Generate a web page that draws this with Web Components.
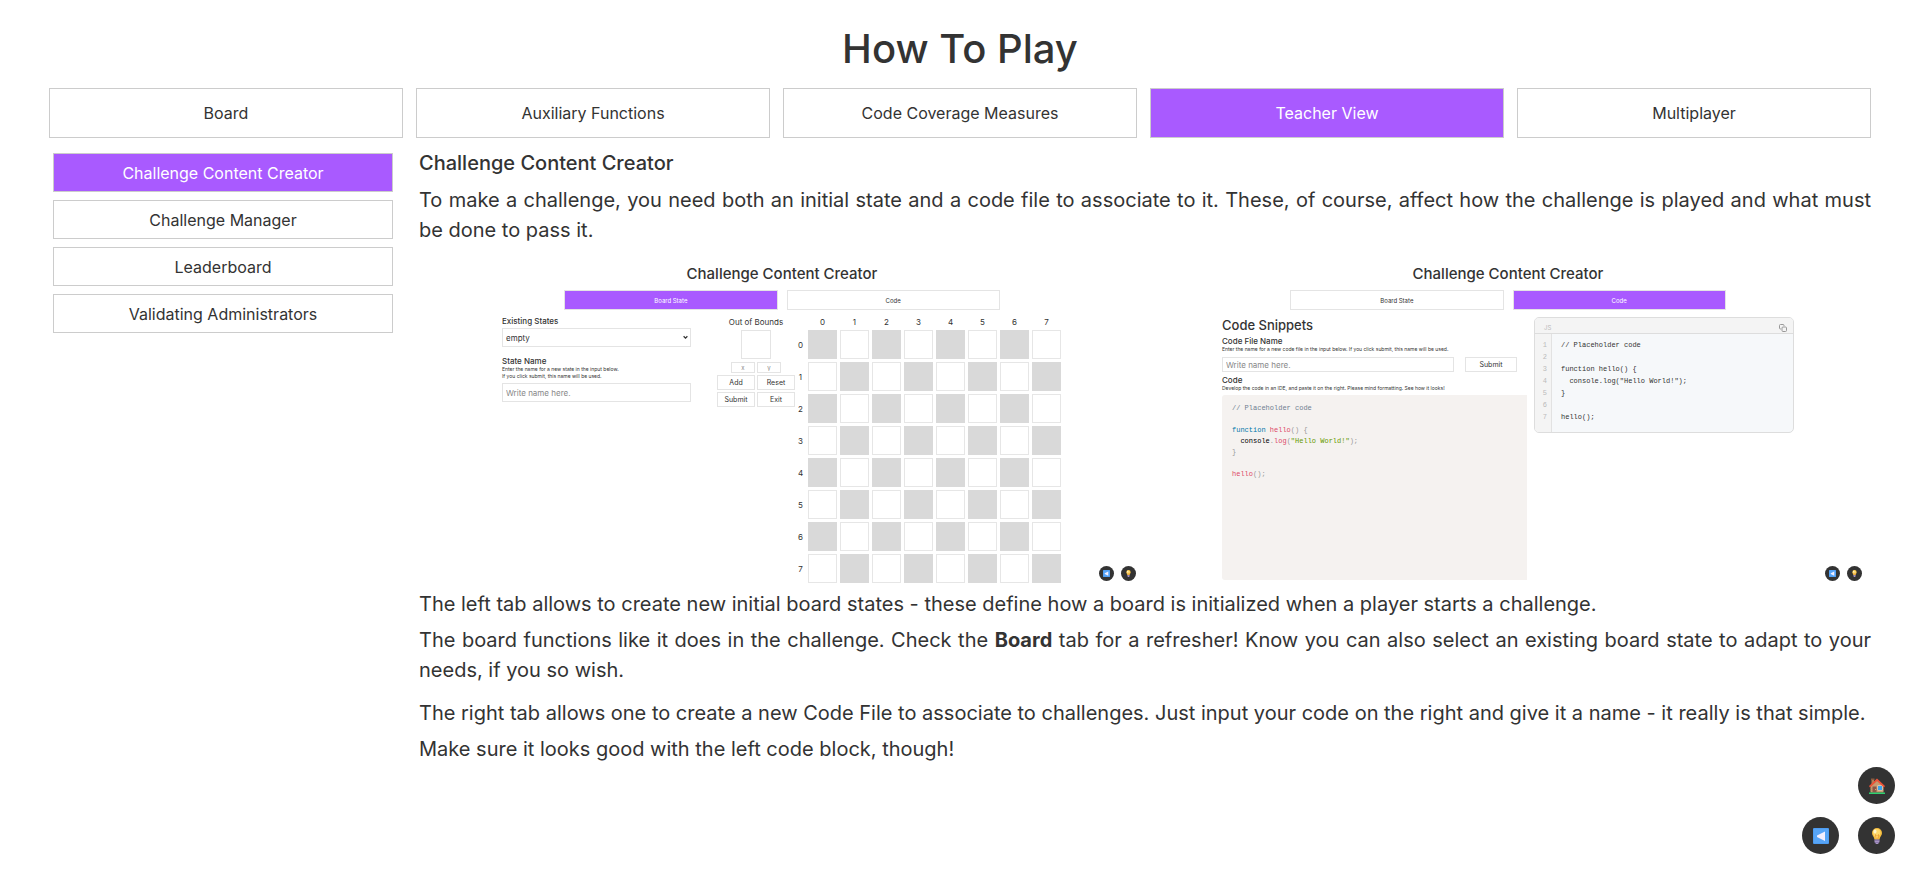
<!DOCTYPE html>
<html lang="en">
<head>
<meta charset="utf-8">
<title>How To Play</title>
<style>
  body { margin: 0; font-family: Inter, "Open Sans", sans-serif; color: #333; background: #fff; }
</style>
</head>
<body>

<how-to-page>
  <span slot="title">How To Play</span>
  <tab-button slot="tabs" kind="main">Board</tab-button>
  <tab-button slot="tabs" kind="main">Auxiliary Functions</tab-button>
  <tab-button slot="tabs" kind="main">Code Coverage Measures</tab-button>
  <tab-button slot="tabs" kind="main" active>Teacher View</tab-button>
  <tab-button slot="tabs" kind="main">Multiplayer</tab-button>

  <tab-button slot="sections" kind="side" active>Challenge Content Creator</tab-button>
  <tab-button slot="sections" kind="side">Challenge Manager</tab-button>
  <tab-button slot="sections" kind="side">Leaderboard</tab-button>
  <tab-button slot="sections" kind="side">Validating Administrators</tab-button>

  <help-article>
    <span slot="heading">Challenge Content Creator</span>
    <help-text>To make a challenge, you need both an initial state and a code file to associate to it. These, of course, affect how the challenge is played and what must be done to pass it.</help-text>
    <figure-row>
      <creator-figure active="state"><board-state-view></board-state-view></creator-figure>
      <creator-figure active="code"><code-view></code-view></creator-figure>
    </figure-row>
    <help-text>The left tab allows to create new initial board states - these define how a board is initialized when a player starts a challenge.</help-text>
    <help-text spaced>The board functions like it does in the challenge. Check the <b>Board</b> tab for a refresher! Know you can also select an existing board state to adapt to your needs, if you so wish.</help-text>
    <help-text>The right tab allows one to create a new Code File to associate to challenges. Just input your code on the right and give it a name - it really is that simple.</help-text>
    <help-text>Make sure it looks good with the left code block, though!</help-text>
  </help-article>

  <round-button slot="float" class="first" icon="home" label="Home"></round-button>
  <round-button slot="float" icon="back" label="Back"></round-button>
  <round-button slot="float" icon="bulb" label="Hint"></round-button>
</how-to-page>

<script>
const BASE = `
  *, *::before, *::after { box-sizing: border-box; }
  button, input, select, textarea { font: inherit; color: inherit; margin: 0; border-radius: 0; outline: 0; }
`;

function define(name, html, setup) {
  const template = document.createElement('template');
  template.innerHTML = `<style>${BASE}</style>${html}`;
  customElements.define(name, class extends HTMLElement {
    constructor() {
      super();
      this.attachShadow({ mode: 'open' }).append(template.content.cloneNode(true));
    }
    connectedCallback() { if (setup) setup(this, this.shadowRoot); }
  });
}

/* Emoji-like pictures used in the round buttons */
const ICONS = {
  home: `<svg viewBox="0 0 32 32" aria-hidden="true">
    <path fill="#b07c55" d="M5 3h5v9H5z"/><path fill="#8a5c40" d="M4 1h7v3H4z"/>
    <path fill="#c79a70" d="M16 5 29 17v12H3V17z"/>
    <path fill="#b58a62" d="M3 20h26v1H3zM3 24h26v1H3z"/>
    <path fill="#8a5548" d="M7 17h8v12H7z"/><circle cx="13" cy="23" r="1" fill="#e8bd80"/>
    <path fill="#efe9e0" d="M17 15h10v10H17z"/><path fill="#3da3ea" d="M18 16h8v8h-8z"/>
    <path fill="#ee5238" d="M16 1 0 16l2 3L16 6l14 13 2-3z"/>
    <path fill="#2fd070" d="M0 29h32v3H0z"/></svg>`,
  back: `<svg viewBox="0 0 32 32" aria-hidden="true">
    <rect width="32" height="32" rx="2" fill="#4795ec"/>
    <rect x="1" y="1" width="30" height="30" rx="2" fill="#57a5f7"/>
    <path fill="#f4efff" d="M24 7v19L8 18v-3z"/></svg>`,
  bulb: `<svg viewBox="0 0 32 32" aria-hidden="true">
    <path fill="#f6bd3c" d="M16 0a10 10 0 0 0-10 10c0 5 4 7 5 13h10c1-6 5-8 5-13A10 10 0 0 0 16 0z"/>
    <path fill="#ffd96b" d="M14 2a8 8 0 0 0-6 8c0 4 4 6 5 11h4c2-6 6-7 6-12s-4-8-9-7z"/>
    <ellipse cx="12" cy="7" rx="3" ry="4" fill="#fff4c8"/>
    <path fill="#e7902c" d="m12 12 2 11h1l-1-9 2 2 2-2-1 9h1l2-11-4 3z"/>
    <path fill="#a895c4" d="M11 23h10v5l-3 4h-4l-3-4z"/>
    <path fill="#6f5c90" d="M11 25h10v1H11zM11 28h9v1h-9z"/></svg>`
};

define('how-to-page', `
  <style>
    :host { display: block; padding: 18px 49px 40px; }
    h1 { margin: 0 0 8px; font-size: 40px; line-height: 62px; font-weight: 500; text-align: center; }
    .tabs { display: grid; grid-template-columns: repeat(5, 1fr); gap: 13px; }
    .columns { display: grid; grid-template-columns: 340px minmax(0, 1fr); gap: 26px; padding: 10px 0 0 4px; }
    .sections { display: flex; flex-direction: column; gap: 8px; padding-top: 5px; }
    .float { position: fixed; right: 25px; bottom: 24px; display: grid;
             grid-template-columns: auto auto; gap: 13px 19px; }
    ::slotted(.first) { grid-column: 2; }
  </style>
  <h1><slot name="title"></slot></h1>
  <nav class="tabs" aria-label="Topics"><slot name="tabs"></slot></nav>
  <div class="columns">
    <nav class="sections" aria-label="Sections"><slot name="sections"></slot></nav>
    <main><slot></slot></main>
  </div>
  <div class="float"><slot name="float"></slot></div>
`);

define('tab-button', `
  <style>
    :host { display: block; }
    button { display: block; width: 100%; padding: 0; border: 1px solid #ccc; background: #fff;
             font-size: 16px; height: 39px; cursor: pointer; }
    :host([kind="main"]) button { height: 50px; }
    :host([kind="mini"]) button { height: 20px; font-size: 6px; border-color: #e4e4e4; }
    :host([active]) button { background: #a95aff; color: #fff; }
  </style>
  <button type="button"><slot></slot></button>
`);

define('help-article', `
  <style>
    :host { display: block; }
    h2 { margin: 0 0 7px; font-size: 20px; line-height: 30px; font-weight: 500; }
  </style>
  <article><h2><slot name="heading"></slot></h2><slot></slot></article>
`);

define('help-text', `
  <style>
    :host { display: block; }
    p { margin: 0 0 6px; font-size: 20px; line-height: 30px; text-align: justify; }
    :host([spaced]) p { margin-bottom: 13px; }
  </style>
  <p><slot></slot></p>
`);

define('figure-row', `
  <style>
    :host { display: grid; grid-template-columns: 1fr 1fr; padding: 9px 0 6px; }
  </style>
  <slot></slot>
`);

define('round-button', `
  <style>
    :host { display: block; }
    button { display: flex; align-items: center; justify-content: center; width: 37px; height: 37px;
             padding: 0; border: 0; border-radius: 50%; background: #333; cursor: pointer; }
    svg { display: block; width: 16px; height: 16px; }
    :host([small]) button { width: 15px; height: 15px; }
    :host([small]) svg { width: 7px; height: 7px; }
  </style>
  <button type="button"></button>
`, (host, root) => {
  const button = root.querySelector('button');
  button.setAttribute('aria-label', host.getAttribute('label'));
  button.innerHTML = ICONS[host.getAttribute('icon')];
});

define('creator-figure', `
  <style>
    :host { display: block; }
    figure { position: relative; margin: 0; height: 323px; padding-top: 4px; }
    h3 { margin: 0 0 6px; font-size: 15px; line-height: 20px; font-weight: 500; text-align: center; }
    .tabs { display: grid; grid-template-columns: 1fr 1fr; gap: 9px; width: 60%; margin: 0 auto; }
    .float { position: absolute; right: 9px; bottom: 2px; display: flex; gap: 7px; }
  </style>
  <figure>
    <h3>Challenge Content Creator</h3>
    <div class="tabs">
      <tab-button kind="mini">Board State</tab-button>
      <tab-button kind="mini">Code</tab-button>
    </div>
    <slot></slot>
    <div class="float">
      <round-button small icon="back" label="Back"></round-button>
      <round-button small icon="bulb" label="Hint"></round-button>
    </div>
  </figure>
`, (host, root) => {
  const tabs = root.querySelectorAll('tab-button');
  tabs[host.getAttribute('active') === 'code' ? 1 : 0].setAttribute('active', '');
});

const FORM = `
    label { display: block; font-weight: 500; font-size: 8px; line-height: 10px; }
    small { display: block; font-size: 5px; line-height: 7px; white-space: nowrap; }
    input, select { display: block; width: 100%; padding: 0 3px; border: 1px solid #e4e4e4;
                    background: #fff; font-size: 8px; }
    input::placeholder { color: #888; opacity: 1; }
    button { display: block; padding: 0; border: 1px solid #e4e4e4; background: #fff;
             font-size: 7px; line-height: 9px; height: 15px; }
`;

define('board-state-view', `
  <style>
    :host { display: grid; grid-template-columns: 189px 1fr 266px; align-items: start;
            padding: 6px 84px 0 83px; }
    ${FORM}
    .pick { position: relative; margin: 2px 0 9px; }
    select { height: 19px; appearance: none; }
    .pick svg { position: absolute; right: 3px; top: 7px; width: 5px; height: 5px; }
    .name { height: 19px; margin-top: 3px; }
    .bounds { display: grid; grid-template-columns: 38px 38px; gap: 2px; justify-content: end; }
    .bounds span { grid-column: 1 / 3; text-align: center; font-size: 8px; line-height: 12px; }
    .bin { grid-column: 1 / 3; width: 30px; height: 29px; margin: 0 auto 1px; border: 1px solid #e4e4e4; }
    .bounds input { width: 24px; height: 11px; font-size: 6px; padding: 0; text-align: center; }
    .bounds input:first-of-type { justify-self: end; }
    table { border-collapse: separate; border-spacing: 0; table-layout: fixed; width: 266px; }
    th { padding: 0; font-size: 8px; line-height: 12px; font-weight: 400; text-align: center; }
    thead th { width: 32px; height: 14px; padding-right: 3px; vertical-align: top; }
    tbody th { padding: 0 2px 3px 0; vertical-align: middle; }
    td { padding: 0; height: 32px; }
    thead td { width: 13px; height: 14px; }
    .cell { display: block; width: 29px; height: 29px; margin-bottom: 3px; border: 1px solid #e6e6e6; background: #fff; }
    .cell.dark { background: #d9d9d9; border-color: #d9d9d9; }
  </style>
  <div>
    <label for="states">Existing States</label>
    <div class="pick">
      <select id="states"><option>empty</option></select>
      <svg viewBox="0 0 8 8" aria-hidden="true"><path d="m1 2 3 3 3-3" fill="none" stroke="#333" stroke-width="2"/></svg>
    </div>
    <label for="name">State Name</label>
    <small>Enter the name for a new state in the input below.</small>
    <small>If you click submit, this name will be used.</small>
    <input class="name" id="name" placeholder="Write name here.">
  </div>
  <div class="bounds">
    <span>Out of Bounds</span>
    <div class="bin"></div>
    <input aria-label="x" placeholder="x"><input aria-label="y" placeholder="y">
    <button type="button">Add</button><button type="button">Reset</button>
    <button type="button">Submit</button><button type="button">Exit</button>
  </div>
  <table aria-label="Board"><thead><tr><td></td></tr></thead><tbody></tbody></table>
`, (host, root) => {
  const head = root.querySelector('thead tr');
  const body = root.querySelector('tbody');
  if (body.children.length) return;
  for (let r = 0; r < 8; r++) {
    head.insertAdjacentHTML('beforeend', `<th scope="col">${r}</th>`);
    let row = `<th scope="row">${r}</th>`;
    for (let c = 0; c < 8; c++) row += `<td><span class="cell${(r + c) % 2 ? '' : ' dark'}"></span></td>`;
    body.insertAdjacentHTML('beforeend', `<tr>${row}</tr>`);
  }
});

define('code-view', `
  <style>
    :host { display: grid; grid-template-columns: 305px 260px; justify-content: space-between;
            align-items: start; padding: 7px 77px 0 77px; }
    ${FORM}
    h4 { margin: 0 0 3px; font-size: 13px; line-height: 16px; font-weight: 500; }
    .row { display: grid; grid-template-columns: 232px 52px; gap: 11px; margin: 4px 0 3px; }
    .row input { height: 15px; }
    pre { margin: 0; font-family: "Liberation Mono", monospace; font-size: 7px; }
    .editor { height: 185px; margin-top: 3px; padding: 9px 10px; background: #f5f2f0; border-radius: 3px 0 0 3px; color: #999; }
    .editor code { display: block; height: 11px; line-height: 11px; font: inherit; }
    .comment { color: #708090; } .key { color: #0077aa; } .fn { color: #dd4a68; }
    .obj { color: #000; } .str { color: #669900; }
    .card { border: 1px solid #ddd; border-radius: 5px; background: #f6f8fa; overflow: hidden; color: #bbb; }
    .bar { display: flex; justify-content: space-between; align-items: end; height: 16px; padding: 0 6px 1px 9px;
           background: #f4f4f4; border-bottom: 1px solid #ddd; font-size: 6px; line-height: 9px; }
    .bar svg { width: 8px; height: 8px; }
    .code { display: grid; grid-template-columns: 17px 1fr; }
    .code pre { line-height: 12px; padding: 5px 0 9px 9px; color: #333; height: 98px; }
    .code .lines { padding: 5px 4px 9px 0; text-align: right; color: #bbb; background: #f4f4f4; border-right: 1px solid #e2e2e2; }
  </style>
  <section>
    <h4>Code Snippets</h4>
    <label for="file">Code File Name</label>
    <small>Enter the name for a new code file in the input below. If you click submit, this name will be used.</small>
    <div class="row">
      <input id="file" placeholder="Write name here.">
      <button type="button">Submit</button>
    </div>
    <label>Code</label>
    <small>Develop the code in an IDE, and paste it on the right. Please mind formatting. See how it looks!</small>
    <pre class="editor"><code class="comment">// Placeholder code</code><code></code><code><span class="key">function</span> <span class="fn">hello</span>() {</code><code>  <span class="obj">console</span>.<span class="fn">log</span>(<span class="str">"Hello World!"</span>);</code><code>}</code><code></code><code><span class="fn">hello</span>();</code></pre>
  </section>
  <div class="card">
    <div class="bar"><span>JS</span>
      <svg viewBox="0 0 16 16" fill="none" stroke="#999" stroke-width="2" aria-hidden="true"><rect x="6" y="6" width="9" height="9" rx="2"/><path d="M4 10H3a2 2 0 0 1-2-2V3a2 2 0 0 1 2-2h5a2 2 0 0 1 2 2v1"/></svg>
    </div>
    <div class="code">
<pre class="lines">1
2
3
4
5
6
7</pre>
<pre>// Placeholder code

function hello() {
  console.log("Hello World!");
}

hello();</pre>
    </div>
  </div>
`);
</script>
</body>
</html>
